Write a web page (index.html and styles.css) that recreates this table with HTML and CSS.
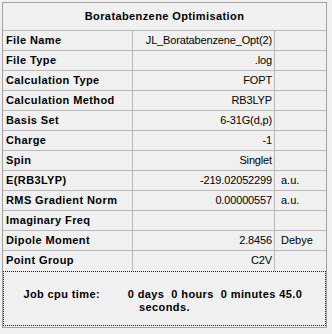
FILE: index.html
```html
<!DOCTYPE html>
<html>
<head>
<meta charset="utf-8">
<title>Boratabenzene Optimisation</title>
<link rel="stylesheet" href="styles.css">
</head>
<body>
	<div id="summary">
		<div class="grid">
			<div class="title">Boratabenzene Optimisation</div>

			<div class="name">File Name</div><div class="value">JL_Boratabenzene_Opt(2)</div><div class="unit"></div>
			<div class="name">File Type</div><div class="value">.log</div><div class="unit"></div>
			<div class="name">Calculation Type</div><div class="value">FOPT</div><div class="unit"></div>
			<div class="name">Calculation Method</div><div class="value">RB3LYP</div><div class="unit"></div>
			<div class="name">Basis Set</div><div class="value">6-31G(d,p)</div><div class="unit"></div>
			<div class="name">Charge</div><div class="value">-1</div><div class="unit"></div>
			<div class="name">Spin</div><div class="value">Singlet</div><div class="unit"></div>
			<div class="name">E(RB3LYP)</div><div class="value">-219.02052299</div><div class="unit">a.u.</div>
			<div class="name">RMS Gradient Norm</div><div class="value">0.00000557</div><div class="unit">a.u.</div>
			<div class="name">Imaginary Freq</div><div class="value"></div><div class="unit"></div>
			<div class="name">Dipole Moment</div><div class="value">2.8456</div><div class="unit">Debye</div>
			<div class="name last">Point Group</div><div class="value last">C2V</div><div class="unit last"></div>
		</div>
		<div class="cpu">Job cpu time:        0 days  0 hours  0 minutes 45.0 <br>seconds.</div>
	</div>
</body>
</html>
```

FILE: styles.css
```css
*{
	margin: 0;
	padding: 0;
	box-sizing: border-box;
}
body{
	background: #f0f0f0;
	color: #000;
	font-family: "Liberation Sans", Arial, sans-serif;
	font-size: 11px;
}
#summary{
	margin: 2px 0 0 2px;
	width: 325px;
	height: 326px;
	border: 1px solid #a0a0a0;
	background: #f0f0f0;
}
.grid{
	display: grid;
	grid-template-columns: 130px 142px 51px;
}
.grid > div{
	height: 20px;
	line-height: 19px;
	border-bottom: 1px solid #b9b9b9;
	white-space: nowrap;
	overflow: hidden;
}
.grid .title{
	grid-column: 1 / 4;
	height: 28px;
	line-height: 27px;
	font-weight: bold;
	letter-spacing: 0.4px;
	text-align: center;
}
.name{
	font-weight: bold;
	letter-spacing: 0.4px;
	padding-left: 3px;
	border-right: 1px solid #b9b9b9;
}
.value{
	text-align: right;
	letter-spacing: -0.15px;
	padding-right: 2px;
	border-right: 1px solid #b9b9b9;
}
.unit{
	padding-left: 6px;
}
.grid .last{
	border-bottom: none;
}
/* tab-separated cpu time, spaces stand in for the tab stop */
.cpu{
	height: 55px;
	border: 1px dotted #202020;
	padding-top: 16px;
	font-weight: bold;
	letter-spacing: 0.4px;
	line-height: 13px;
	text-align: center;
	white-space: pre;
}
```
